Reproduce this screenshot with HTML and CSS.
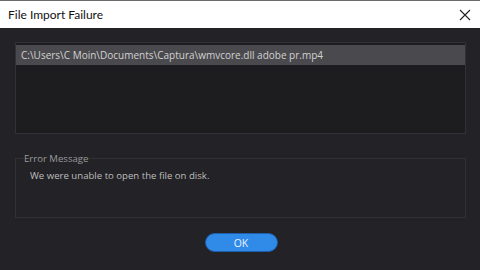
FILE: index.html
```html
<!DOCTYPE html>
<html lang="en">
<head>
    <meta charset="UTF-8">
    <title>File Import Failure</title>
    <link rel="stylesheet" href="styles.css">
</head>
<body>
    <div class="dialog">
        <div class="titlebar">
            <span class="title">File Import Failure</span>
            <svg class="close" width="12" height="12" viewBox="0 0 12 12">
                <path d="M1 1 L11 11 M11 1 L1 11" stroke="#222" stroke-width="1.1" fill="none"/>
            </svg>
        </div>

        <div class="content">
            <div class="file-list">
                <div class="file-row selected">C:\Users\C Moin\Documents\Captura\wmvcore.dll adobe pr.mp4</div>
            </div>

            <fieldset class="message">
                <legend>Error Message</legend>
                <p>We were unable to open the file on disk.</p>
            </fieldset>

            <div class="actions">
                <button class="ok">OK</button>
            </div>
        </div>
    </div>
</body>
</html>
```

FILE: styles.css
```css
:root {
    --bg: #232226;
    --panel: #1d1c1f;
    --line: #323135;
    --text: #bdbdbd;
    --accent: #2f8ae8;
}

body {
    margin: 0;
    background-color: var(--bg);
    font-family: 'Open Sans', 'Noto Sans', sans-serif;
    overflow: hidden;
}

.dialog {
    width: 480px;
    height: 270px;
    display: flex;
    flex-direction: column;
    border-top: 1px solid #6b6b6b;
    box-sizing: border-box;
}

.titlebar {
    height: 27px;
    background-color: white;
    display: flex;
    align-items: center;
    justify-content: space-between;
    padding: 0 8px 0 8px;
    flex-shrink: 0;
}

.title {
    font-family: Lato, 'Open Sans', sans-serif;
    font-size: 12px;
    color: #111;
}

.close {
    margin-right: 1px;
}

.content {
    flex: 1;
    padding: 14px 14px 0 15px;
    display: flex;
    flex-direction: column;
}

.file-list {
    height: 88px;
    background-color: var(--panel);
    border: 1px solid var(--line);
    padding: 2px 0 0 0;
}

.file-row {
    height: 20px;
    line-height: 20px;
    font-size: 10px;
    color: #d2d2d2;
    padding-left: 5px;
}

.file-row.selected {
    background-color: #4a494d;
}

.message {
    margin: 19px 0 0 0;
    height: 63px;
    border: 1px solid var(--line);
    padding: 0 0 0 14px;
}

.message legend {
    font-size: 9.6px;
    color: #9a9a9a;
    padding: 0;
    margin-left: -6px;
    line-height: 11px;
}

.message p {
    margin: 5px 0 0 0;
    font-size: 9.6px;
    color: var(--text);
}

.actions {
    display: flex;
    justify-content: center;
    padding-top: 15px;
    padding-left: 1px;
}

.ok {
    width: 73px;
    height: 19px;
    border-radius: 10px;
    border: 1px solid #1d5fa8;
    background-color: var(--accent);
    color: #eaf2ff;
    font-family: inherit;
    font-size: 10.5px;
    padding: 0;
}
```
